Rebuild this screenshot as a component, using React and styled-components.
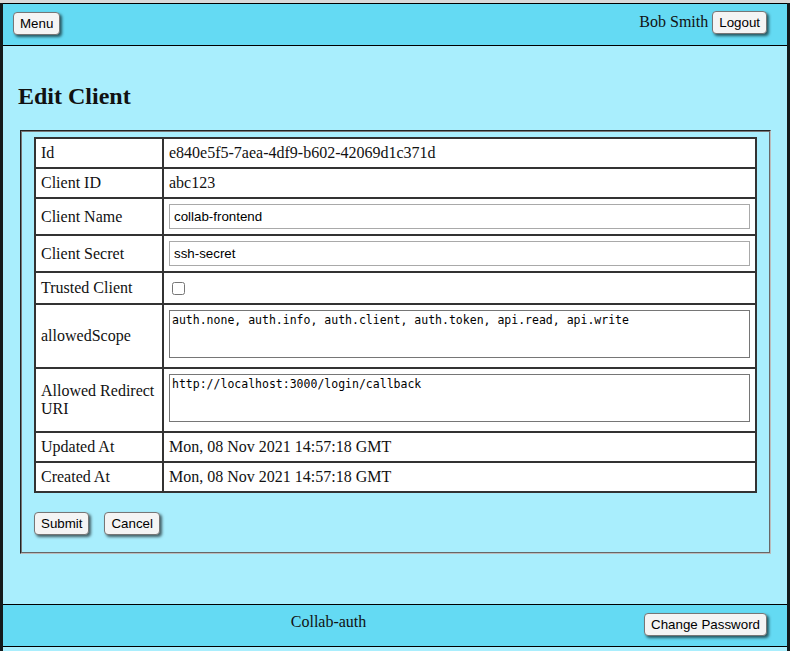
import React from "react";
import styled, { createGlobalStyle } from "styled-components";

const Global = createGlobalStyle`
  html, body { margin: 0; padding: 0; }
  body {
    background: #131a1b;
    border-top: 3px solid #d9d9d9;
    font-family: "Liberation Serif", "Times New Roman", serif;
    font-size: 16px;
    color: #111;
  }
`;

const Page = styled.div`
  margin: 0 3px;
  width: 784px;
  background: #a9eefd;
  padding-bottom: 4px;
`;

const Bar = styled.div`
  display: flex;
  justify-content: space-between;
  align-items: flex-start;
  background: #64daf3;
  border-top: 1px solid #000;
  border-bottom: 1px solid #000;
  height: ${(p) => p.$h}px;
  padding: ${(p) => p.$pt}px 20px 0 10px;
  box-sizing: content-box;
`;

const Button = styled.button`
  font-family: "Liberation Sans", Arial, sans-serif;
  font-size: 13.33px;
  line-height: 15px;
  color: #000;
  background: #f4f4f4;
  border: 1px solid #767676;
  border-radius: 4px;
  padding: 3px 6px;
  box-shadow: 2px 2px 3px rgba(0, 0, 0, 0.6);
  cursor: pointer;
`;

const UserBox = styled.div`
  margin-top: -1px;
  white-space: nowrap;
  ${Button} {
    margin-left: 4px;
    vertical-align: baseline;
  }
`;

const Main = styled.main`
  padding: 36px 14px 50px 15px;
`;

const Title = styled.h2`
  margin: 0 0 20px;
  font-size: 24px;
  line-height: 28px;
  font-weight: bold;
`;

const Fieldset = styled.fieldset`
  margin: 0 2px;
  border: 2px groove #c0c0c0;
  border-color: #777 #bbb #bbb #777;
  padding: 5px 12px 10px;
`;

const Table = styled.table`
  width: 100%;
  border-collapse: collapse;
  background: #fff;
  border: 2px solid #333;
`;

const Label = styled.td`
  border: 2px solid #333;
  padding: 5px;
  width: 116px;
  line-height: 18px;
  vertical-align: middle;
`;

const Value = styled.td`
  border: 2px solid #333;
  padding: 5px;
  line-height: 18px;
  vertical-align: middle;
`;

const Input = styled.input`
  display: block;
  box-sizing: border-box;
  width: 100%;
  height: 25px;
  margin: 0;
  padding: 4px;
  border: 1px solid #a9a9a9;
  font-family: "Liberation Sans", Arial, sans-serif;
  font-size: 13.33px;
  color: #000;
`;

const Check = styled.input`
  margin: 3px 3px 3px 3px;
  width: 13px;
  height: 13px;
  vertical-align: middle;
`;

const Area = styled.textarea`
  display: block;
  box-sizing: border-box;
  width: 100%;
  height: 48px;
  margin: 0 0 4px;
  padding: 2px;
  border: 1px solid #767676;
  font-family: "DejaVu Sans Mono", monospace;
  font-size: 11.5px;
  line-height: 14px;
  resize: none;
  color: #000;
`;

const Actions = styled.div`
  display: flex;
  gap: 15px;
  margin: 19px 0 7px;
`;

const FooterText = styled.div`
  margin-top: 0;
  line-height: 18px;
`;

const Spacer = styled.div``;

const rows = [
  ["Id", "e840e5f5-7aea-4df9-b602-42069d1c371d"],
  ["Client ID", "abc123"],
];

export default function App() {
  return (
    <>
      <Global />
      <Page>
        <Bar $h={33} $pt={8}>
          <Button>Menu</Button>
          <UserBox>
            Bob Smith<Button>Logout</Button>
          </UserBox>
        </Bar>
        <Main>
          <Title>Edit Client</Title>
          <Fieldset>
            <Table>
              <tbody>
                {rows.map(([k, v]) => (
                  <tr key={k}>
                    <Label>{k}</Label>
                    <Value>{v}</Value>
                  </tr>
                ))}
                <tr>
                  <Label>Client Name</Label>
                  <Value>
                    <Input defaultValue="collab-frontend" />
                  </Value>
                </tr>
                <tr>
                  <Label>Client Secret</Label>
                  <Value>
                    <Input defaultValue="ssh-secret" />
                  </Value>
                </tr>
                <tr>
                  <Label>Trusted Client</Label>
                  <Value>
                    <Check type="checkbox" />
                  </Value>
                </tr>
                <tr>
                  <Label>allowedScope</Label>
                  <Value>
                    <Area defaultValue="auth.none, auth.info, auth.client, auth.token, api.read, api.write" />
                  </Value>
                </tr>
                <tr>
                  <Label>Allowed Redirect URI</Label>
                  <Value>
                    <Area defaultValue="http://localhost:3000/login/callback" />
                  </Value>
                </tr>
                <tr>
                  <Label>Updated At</Label>
                  <Value>Mon, 08 Nov 2021 14:57:18 GMT</Value>
                </tr>
                <tr>
                  <Label>Created At</Label>
                  <Value>Mon, 08 Nov 2021 14:57:18 GMT</Value>
                </tr>
              </tbody>
            </Table>
            <Actions>
              <Button>Submit</Button>
              <Button>Cancel</Button>
            </Actions>
          </Fieldset>
        </Main>
        <Bar $h={33} $pt={8}>
          <Spacer />
          <FooterText>Collab-auth</FooterText>
          <Button>Change Password</Button>
        </Bar>
      </Page>
    </>
  );
}
